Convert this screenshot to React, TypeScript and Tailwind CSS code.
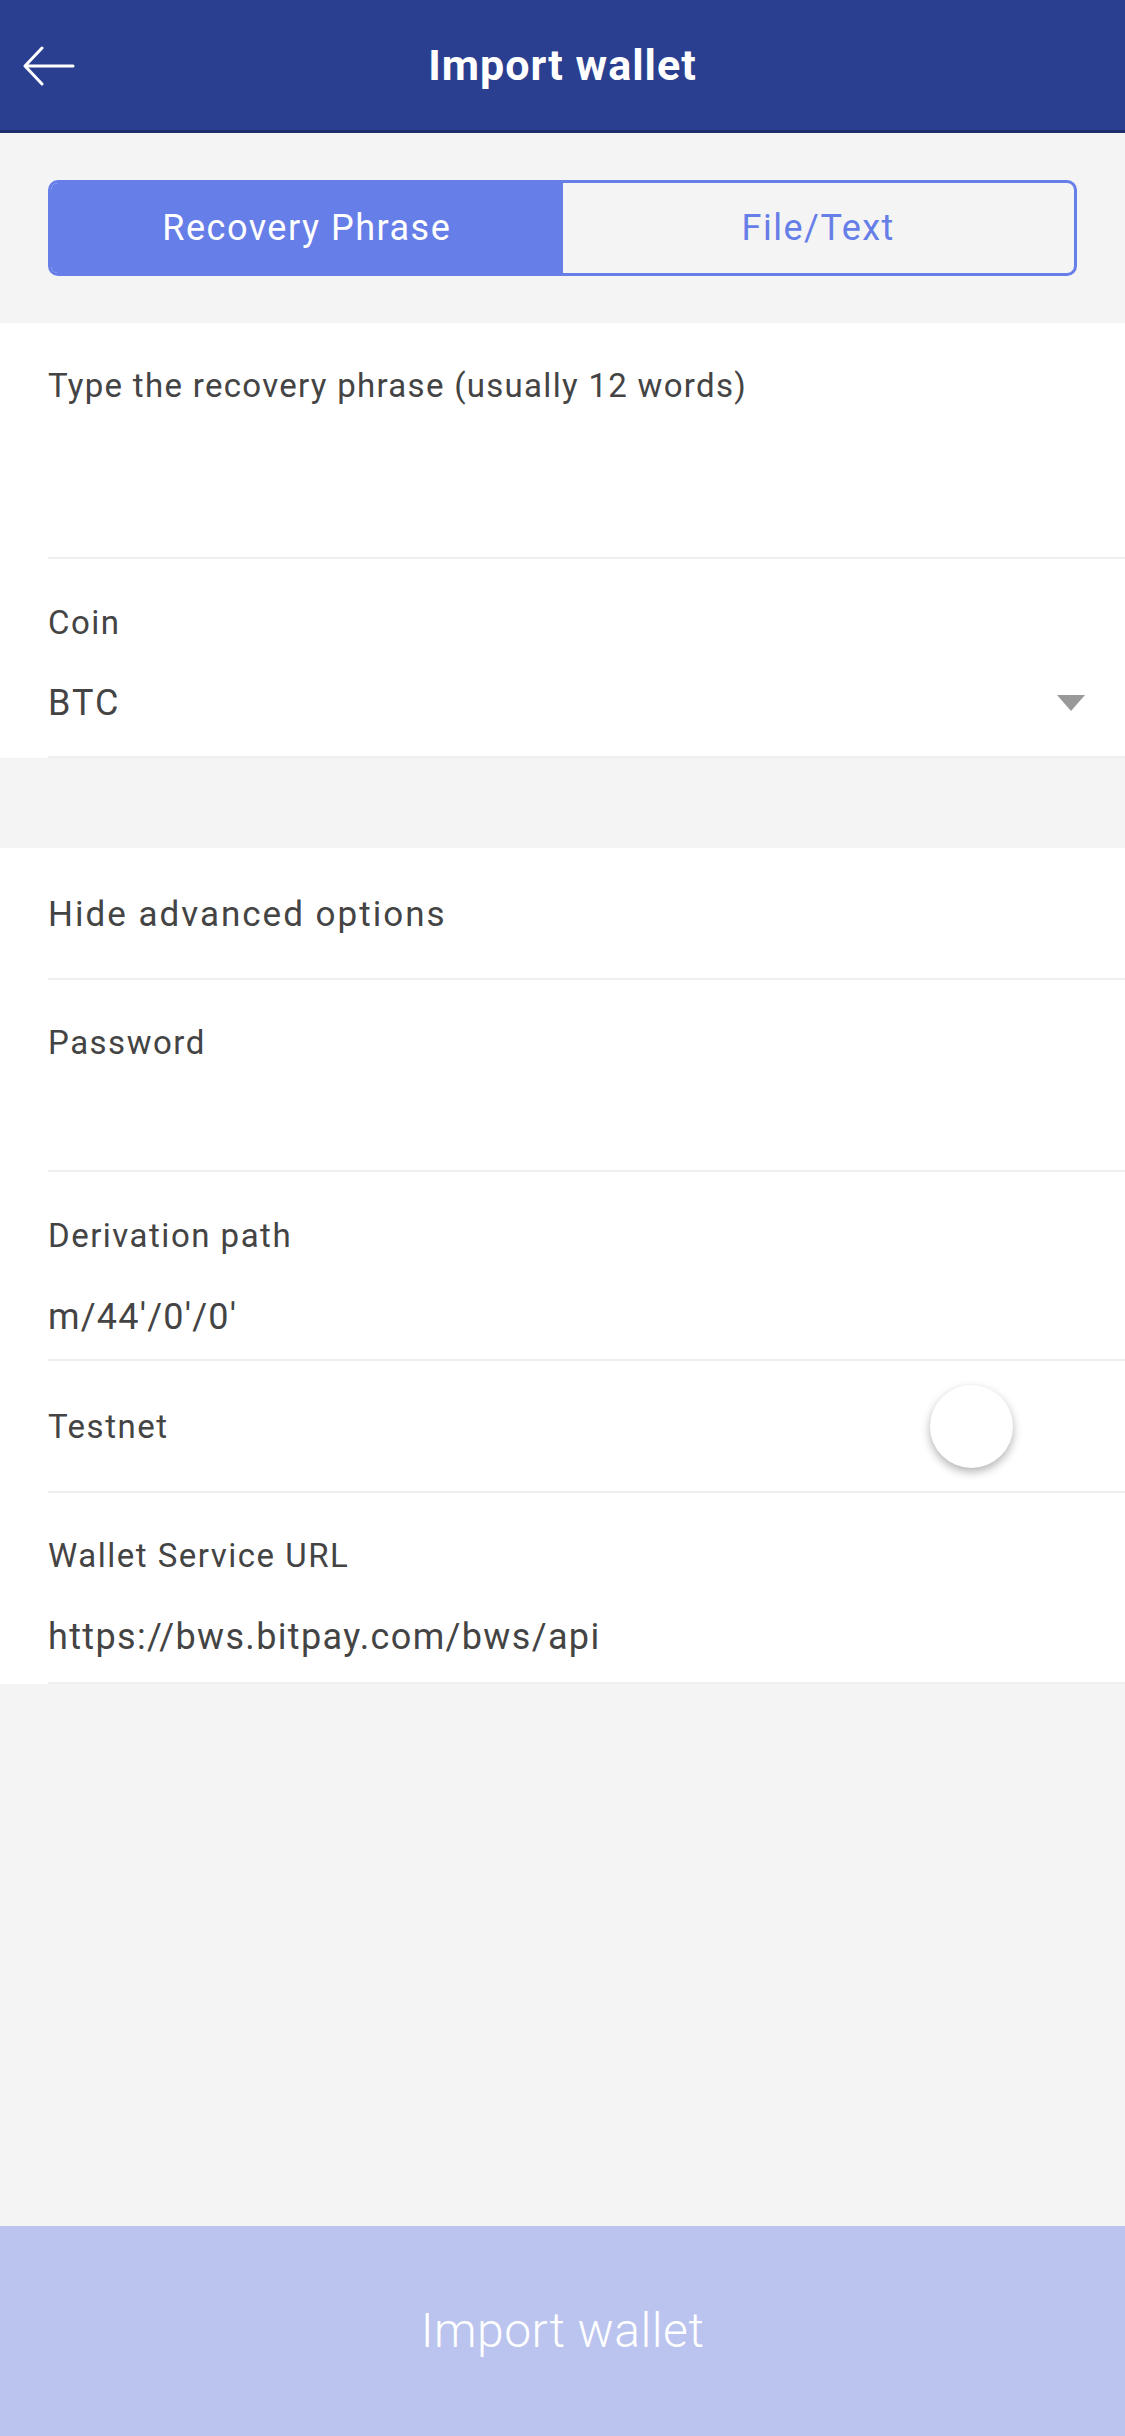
import React from "react";

const font = { fontFamily: "Roboto, 'Noto Sans', sans-serif" };

const BackArrow = () => (
  <svg width="52" height="40" viewBox="0 0 52 40" fill="none">
    <path
      d="M50 20H3M19 2L2 20l17 18"
      stroke="white"
      strokeWidth="3"
      strokeLinecap="round"
      strokeLinejoin="round"
    />
  </svg>
);

const Item = ({
  h,
  className = "",
  children,
}: {
  h: string;
  className?: string;
  children?: React.ReactNode;
}) => (
  <div className={`pl-[48px] bg-white ${h}`}>
    <div className={`h-full border-b-2 border-[#efefef] ${className}`}>{children}</div>
  </div>
);

const Label = ({ children }: { children: React.ReactNode }) => (
  <div className="text-[33px] leading-none tracking-[1.5px]">{children}</div>
);

const Value = ({ children, className = "" }: { children: React.ReactNode; className?: string }) => (
  <div className={`text-[36px] leading-none ${className}`}>{children}</div>
);

const App: React.FC = () => {
  return (
    <div className="min-h-[2436px] w-[1125px] flex flex-col bg-[#f4f4f4] text-[#444444]" style={font}>
      {/* header */}
      <div className="h-[133px] bg-[#2a3f8f] border-b-[3px] border-[#1f2f6e] flex items-center relative">
        <div className="absolute left-[23px] top-[46px]">
          <BackArrow />
        </div>
        <div className="w-full text-center text-white font-bold text-[43px] tracking-[1px] leading-none">
          Import wallet
        </div>
      </div>

      {/* segment */}
      <div className="px-[48px] pt-[47px] pb-[47px]">
        <div className="flex h-[96px] rounded-[10px] border-[3px] border-[#667ee8] overflow-hidden text-[36px] tracking-[1.5px]">
          <div className="flex-1 bg-[#667ee8] text-white flex items-center justify-center">Recovery Phrase</div>
          <div className="flex-1 text-[#667ee8] flex items-center justify-center">File/Text</div>
        </div>
      </div>

      {/* recovery phrase + coin */}
      <div className="bg-white">
        <Item h="h-[236px]" className="pt-[46px]">
          <div className="text-[33px] leading-none tracking-[1.3px]">Type the recovery phrase (usually 12 words)</div>
        </Item>
        <Item h="h-[199px]" className="pt-[47px]">
          <Label>Coin</Label>
          <div className="flex items-center pr-[40px] mt-[46px]">
            <Value className="flex-1 tracking-[2px]">BTC</Value>
            <svg width="28" height="16" viewBox="0 0 28 16">
              <path d="M0 0h28L14 16z" fill="#999999" />
            </svg>
          </div>
        </Item>
      </div>

      <div className="h-[90px]" />

      {/* advanced */}
      <div className="bg-white">
        <Item h="h-[132px]" className="pt-[49px]">
          <div className="text-[35px] leading-none tracking-[2px]">Hide advanced options</div>
        </Item>
        <Item h="h-[192px]" className="pt-[46px]">
          <Label>Password</Label>
        </Item>
        <Item h="h-[189px]" className="pt-[47px]">
          <Label>Derivation path</Label>
          <Value className="mt-[47px] tracking-[1.2px]">m/44'/0'/0'</Value>
        </Item>
        <Item h="h-[132px]" className="flex items-center pr-[112px]">
          <div className="flex-1">
            <Label>Testnet</Label>
          </div>
          <div className="w-[83px] h-[83px] rounded-full bg-white shadow-[0_4px_10px_rgba(0,0,0,0.3)]" />
        </Item>
        <Item h="h-[191px]" className="pt-[46px]">
          <Label>Wallet Service URL</Label>
          <Value className="mt-[47px] tracking-[1.35px]">https://bws.bitpay.com/bws/api</Value>
        </Item>
      </div>

      <div className="flex-1" />

      {/* bottom button */}
      <div className="h-[210px] bg-[#bbc4ee] flex items-center justify-center text-white text-[48px] tracking-[0.5px] font-light">
        Import wallet
      </div>
    </div>
  );
};

export default App;
